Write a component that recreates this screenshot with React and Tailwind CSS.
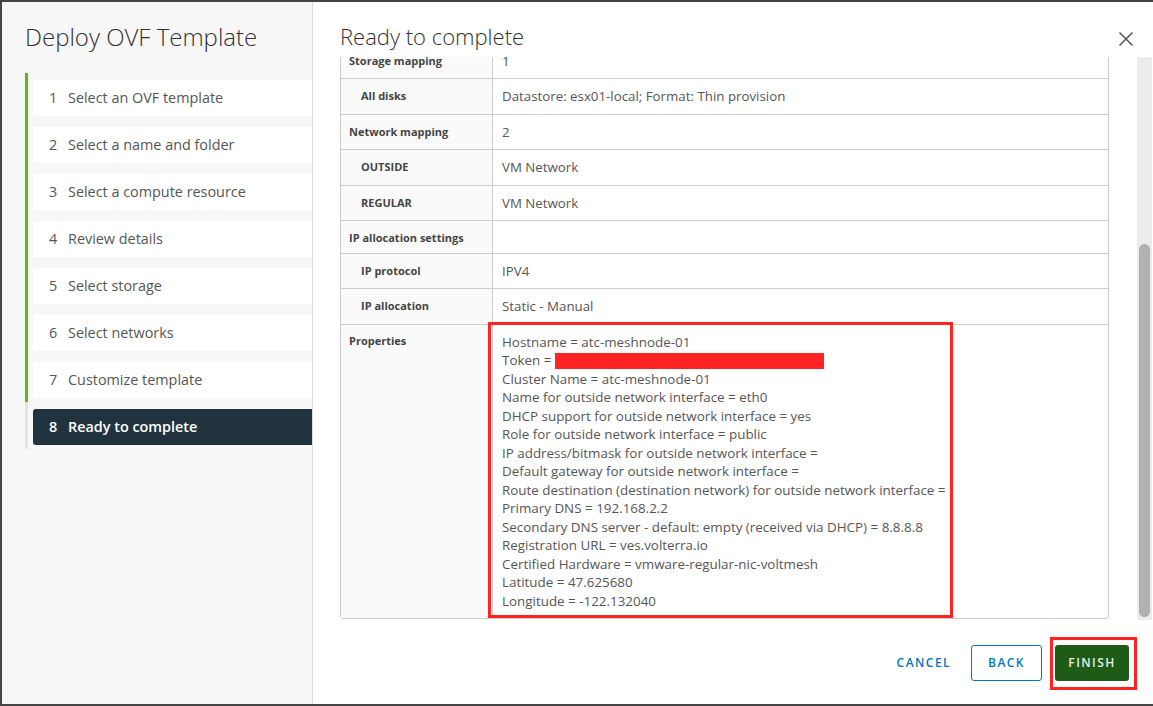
const steps = [
  'Select an OVF template',
  'Select a name and folder',
  'Select a compute resource',
  'Review details',
  'Select storage',
  'Select networks',
  'Customize template',
  'Ready to complete',
]

const rows = [
  { label: 'Storage mapping', value: '1' },
  { label: 'All disks', value: 'Datastore: esx01-local; Format: Thin provision', sub: true },
  { label: 'Network mapping', value: '2' },
  { label: 'OUTSIDE', value: 'VM Network', sub: true },
  { label: 'REGULAR', value: 'VM Network', sub: true },
  { label: 'IP allocation settings', value: '' },
  { label: 'IP protocol', value: 'IPV4', sub: true },
  { label: 'IP allocation', value: 'Static - Manual', sub: true },
]

const props = [
  'Hostname = atc-meshnode-01',
  'TOKEN',
  'Cluster Name = atc-meshnode-01',
  'Name for outside network interface = eth0',
  'DHCP support for outside network interface = yes',
  'Role for outside network interface = public',
  'IP address/bitmask for outside network interface =',
  'Default gateway for outside network interface =',
  'Route destination (destination network) for outside network interface =',
  'Primary DNS = 192.168.2.2',
  'Secondary DNS server - default: empty (received via DHCP) = 8.8.8.8',
  'Registration URL = ves.volterra.io',
  'Certified Hardware = vmware-regular-nic-voltmesh',
  'Latitude = 47.625680',
  'Longitude = -122.132040',
]

export default function App() {
  return (
    <div className="w-[1153px] h-[706px] flex bg-white border-t-2 border-l-2 border-b-2 border-[#444] font-['Open_Sans',sans-serif] text-[#565656] overflow-hidden">

      {/* left: wizard steps */}
      <aside className="w-[311px] shrink-0 bg-[#f7f7f7] border-r border-[#dcdcdc]">
        <h1 className="pl-[23px] pt-[21px] text-[24px] leading-[28px] text-[#313131] font-light">
          Deploy OVF Template
        </h1>
        <ol className="mt-[22px] pl-[23px]">
          {steps.map((s, i) => {
            const current = i === steps.length - 1
            return (
              <li
                key={s}
                className={`border-l-[3px] pl-[5px] pt-[7px] pb-[4px] ${current ? 'border-[#e4e4e4]' : 'border-[#5eb715]'}`}
              >
                <div
                  className={`h-[36px] flex items-center text-[14.4px] ${current ? 'bg-[#21333f] text-white font-semibold rounded-l-[3px]' : 'bg-white'}`}
                >
                  <span className="w-[35px] pl-[16px]">{i + 1}</span>
                  <span>{s}</span>
                </div>
              </li>
            )
          })}
        </ol>
      </aside>

      {/* right: review */}
      <main className="flex-1 flex flex-col">
        <header className="h-[55px] flex justify-between pl-[27px] pr-[19px]">
          <h2 className="pt-[19px] text-[22px] leading-[30px] text-[#313131] font-light">Ready to complete</h2>
          <button className="mt-[29px] w-[16px] h-[16px] text-[#555]">
            <svg viewBox="0 0 16 16" className="w-[16px] h-[16px]" fill="none" stroke="currentColor" strokeWidth="1.5">
              <path d="M1.5 1.5l13 13M14.5 1.5l-13 13" />
            </svg>
          </button>
        </header>

        <div className="h-[563px] flex pl-[27px]">
          <div className="w-[769px] h-full overflow-hidden">
            <div className="-mt-[14px] border border-[#ccc] rounded-b-[3px] text-[13px]">
              {rows.map(r => (
                <div key={r.label} className="flex border-b border-[#ccc]">
                  <div className={`w-[152px] shrink-0 bg-[#fafafa] border-r border-[#ccc] pt-[10px] pb-[9px] text-[11px] leading-[13px] font-bold text-[#454545] ${r.sub ? 'pl-[20px]' : 'pl-[8px]'}`}>
                    {r.label}
                  </div>
                  <div className="py-[10px] pl-[9px] leading-[14.4px] text-[13.3px] text-[#565656]">{r.value}</div>
                </div>
              ))}
              <div className="flex">
                <div className="w-[152px] shrink-0 bg-[#fafafa] border-r border-[#ccc] pt-[9px] pl-[8px] text-[11px] leading-[13px] font-bold text-[#454545]">
                  Properties
                </div>
                <div className="relative flex-1 pt-[8px] pb-[8px] pl-[9px] leading-[18.5px] text-[13.4px]">
                  {props.map(p =>
                    p === 'TOKEN' ? (
                      <div key={p} className="flex items-center">
                        <span>Token =&nbsp;</span>
                        <span className="w-[269px] h-[16px] bg-[#ff2323]" />
                      </div>
                    ) : (
                      <div key={p} className="whitespace-nowrap">{p}</div>
                    )
                  )}
                  <div className="absolute -left-[5px] -top-[3px] w-[465px] bottom-0 border-[3px] border-[#ff2323]" />
                </div>
              </div>
            </div>
          </div>

          {/* scrollbar */}
          <div className="ml-[28px] w-[15px] h-full bg-[#ececec] flex flex-col pt-[187px] pb-[3px] items-center">
            <div className="w-[11px] flex-1 rounded-full bg-[#b1b1b1]" />
          </div>
        </div>

        <footer className="flex-1 flex justify-end items-start pt-[25px] pr-[24px]">
          <button className="h-[36px] mr-[20px] text-[12px] font-semibold tracking-[0.12em] text-[#0079b8]">CANCEL</button>
          <button className="h-[36px] w-[71px] border border-[#0079b8] rounded-[3px] text-[12px] font-semibold tracking-[0.12em] text-[#0079b8]">BACK</button>
          <div className="relative ml-[13px]">
            <button className="h-[36px] w-[74px] rounded-[3px] bg-[#1d5b17] text-[12px] font-semibold tracking-[0.12em] text-[#e6efe4]">FINISH</button>
            <div className="absolute -left-[5px] -top-[8px] -right-[8px] -bottom-[9px] border-[3px] border-[#ff2323]" />
          </div>
        </footer>
      </main>
    </div>
  )
}
